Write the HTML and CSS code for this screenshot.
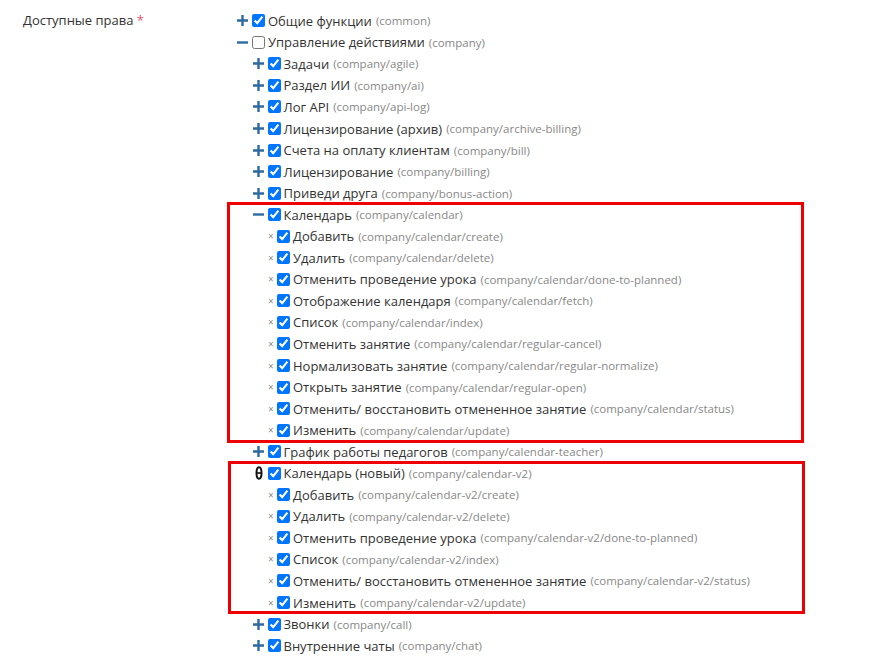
FILE: index.html
```html
<!DOCTYPE html>
<html lang="ru">
<head>
    <meta charset="UTF-8">
    <meta name="viewport" content="width=device-width, initial-scale=1.0">
    <title>Доступные права</title>
    <link rel="stylesheet" href="styles.css">
</head>
<body>
    <svg width="0" height="0" class="defs">
        <symbol id="i-plus" viewBox="0 0 11 11"><path d="M0 5.5h11M5.5 0v11" stroke="currentColor" stroke-width="2.4"/></symbol>
        <symbol id="i-minus" viewBox="0 0 11 11"><path d="M0 5.5h11" stroke="currentColor" stroke-width="2.4"/></symbol>
        <symbol id="i-load" viewBox="0 0 8 14"><ellipse cx="4" cy="7" rx="2.5" ry="5.8" fill="none" stroke="currentColor" stroke-width="2"/><path d="M1.5 7h5" stroke="currentColor" stroke-width="1.6"/></symbol>
    </svg>

    <div class="field">
        <label class="field-label">Доступные права <span class="req">*</span></label>

        <ul class="tree">
            <li>
                <div class="node"><svg class="tg"><use href="#i-plus"/></svg><input type="checkbox" checked><span class="name">Общие функции</span> <span class="code">(common)</span></div>
            </li>
            <li>
                <div class="node"><svg class="tg"><use href="#i-minus"/></svg><input type="checkbox"><span class="name">Управление действиями</span> <span class="code">(company)</span></div>
                <ul>
                    <li><div class="node"><svg class="tg"><use href="#i-plus"/></svg><input type="checkbox" checked><span class="name">Задачи</span> <span class="code">(company/agile)</span></div></li>
                    <li><div class="node"><svg class="tg"><use href="#i-plus"/></svg><input type="checkbox" checked><span class="name">Раздел ИИ</span> <span class="code">(company/ai)</span></div></li>
                    <li><div class="node"><svg class="tg"><use href="#i-plus"/></svg><input type="checkbox" checked><span class="name">Лог API</span> <span class="code">(company/api-log)</span></div></li>
                    <li><div class="node"><svg class="tg"><use href="#i-plus"/></svg><input type="checkbox" checked><span class="name">Лицензирование (архив)</span> <span class="code">(company/archive-billing)</span></div></li>
                    <li><div class="node"><svg class="tg"><use href="#i-plus"/></svg><input type="checkbox" checked><span class="name">Счета на оплату клиентам</span> <span class="code">(company/bill)</span></div></li>
                    <li><div class="node"><svg class="tg"><use href="#i-plus"/></svg><input type="checkbox" checked><span class="name">Лицензирование</span> <span class="code">(company/billing)</span></div></li>
                    <li><div class="node"><svg class="tg"><use href="#i-plus"/></svg><input type="checkbox" checked><span class="name">Приведи друга</span> <span class="code">(company/bonus-action)</span></div></li>
                    <li class="mark">
                        <div class="node"><svg class="tg"><use href="#i-minus"/></svg><input type="checkbox" checked><span class="name">Календарь</span> <span class="code">(company/calendar)</span></div>
                        <ul>
                            <li><div class="node"><span class="leaf">×</span><input type="checkbox" checked><span class="name">Добавить</span> <span class="code">(company/calendar/create)</span></div></li>
                            <li><div class="node"><span class="leaf">×</span><input type="checkbox" checked><span class="name">Удалить</span> <span class="code">(company/calendar/delete)</span></div></li>
                            <li><div class="node"><span class="leaf">×</span><input type="checkbox" checked><span class="name">Отменить проведение урока</span> <span class="code">(company/calendar/done-to-planned)</span></div></li>
                            <li><div class="node"><span class="leaf">×</span><input type="checkbox" checked><span class="name">Отображение календаря</span> <span class="code">(company/calendar/fetch)</span></div></li>
                            <li><div class="node"><span class="leaf">×</span><input type="checkbox" checked><span class="name">Список</span> <span class="code">(company/calendar/index)</span></div></li>
                            <li><div class="node"><span class="leaf">×</span><input type="checkbox" checked><span class="name">Отменить занятие</span> <span class="code">(company/calendar/regular-cancel)</span></div></li>
                            <li><div class="node"><span class="leaf">×</span><input type="checkbox" checked><span class="name">Нормализовать занятие</span> <span class="code">(company/calendar/regular-normalize)</span></div></li>
                            <li><div class="node"><span class="leaf">×</span><input type="checkbox" checked><span class="name">Открыть занятие</span> <span class="code">(company/calendar/regular-open)</span></div></li>
                            <li><div class="node"><span class="leaf">×</span><input type="checkbox" checked><span class="name">Отменить/ восстановить отмененное занятие</span> <span class="code">(company/calendar/status)</span></div></li>
                            <li><div class="node"><span class="leaf">×</span><input type="checkbox" checked><span class="name">Изменить</span> <span class="code">(company/calendar/update)</span></div></li>
                        </ul>
                    </li>
                    <li><div class="node"><svg class="tg"><use href="#i-plus"/></svg><input type="checkbox" checked><span class="name">График работы педагогов</span> <span class="code">(company/calendar-teacher)</span></div></li>
                    <li class="mark mark-v2">
                        <div class="node"><svg class="tg tg-load"><use href="#i-load"/></svg><input type="checkbox" checked><span class="name">Календарь (новый)</span> <span class="code">(company/calendar-v2)</span></div>
                        <ul>
                            <li><div class="node"><span class="leaf">×</span><input type="checkbox" checked><span class="name">Добавить</span> <span class="code">(company/calendar-v2/create)</span></div></li>
                            <li><div class="node"><span class="leaf">×</span><input type="checkbox" checked><span class="name">Удалить</span> <span class="code">(company/calendar-v2/delete)</span></div></li>
                            <li><div class="node"><span class="leaf">×</span><input type="checkbox" checked><span class="name">Отменить проведение урока</span> <span class="code">(company/calendar-v2/done-to-planned)</span></div></li>
                            <li><div class="node"><span class="leaf">×</span><input type="checkbox" checked><span class="name">Список</span> <span class="code">(company/calendar-v2/index)</span></div></li>
                            <li><div class="node"><span class="leaf">×</span><input type="checkbox" checked><span class="name">Отменить/ восстановить отмененное занятие</span> <span class="code">(company/calendar-v2/status)</span></div></li>
                            <li><div class="node"><span class="leaf">×</span><input type="checkbox" checked><span class="name">Изменить</span> <span class="code">(company/calendar-v2/update)</span></div></li>
                        </ul>
                    </li>
                    <li><div class="node"><svg class="tg"><use href="#i-plus"/></svg><input type="checkbox" checked><span class="name">Звонки</span> <span class="code">(company/call)</span></div></li>
                    <li><div class="node"><svg class="tg"><use href="#i-plus"/></svg><input type="checkbox" checked><span class="name">Внутренние чаты</span> <span class="code">(company/chat)</span></div></li>
                </ul>
            </li>
        </ul>
    </div>
</body>
</html>
```

FILE: styles.css
```css
body {
    margin: 0;
    background-color: #fff;
    color: #333;
    font-family: 'Open Sans', sans-serif;
    font-size: 13px;
}
.defs {
    position: absolute;
}
.field {
    display: grid;
    grid-template-columns: 214px 1fr;
    padding: 10px 0 0 23px;
}
.field-label {
    line-height: 21.55px;
}
.req {
    color: #e0566a;
}
.tree, .tree ul {
    list-style: none;
    margin: 0;
    padding: 0;
}
.tree ul {
    padding-left: 15.5px;
}
.node {
    display: flex;
    align-items: center;
    height: 21.55px;
    white-space: nowrap;
}
.node input {
    width: 13px;
    height: 13px;
    margin: 0 3px 0 4px;
    flex: none;
}
.tg {
    width: 11px;
    height: 11px;
    color: #2d6a9f;
    flex: none;
}
.tg-load {
    width: 8px;
    height: 14px;
    margin-left: 2px;
    margin-right: 1px;
    color: #111;
}
.leaf {
    color: #8a8a8a;
    font-size: 10px;
    width: 6px;
    margin-right: -1px;
}
.code {
    color: #888;
    font-size: 11.5px;
    margin-left: 4px;
}

/* выделение групп */
.mark {
    width: 549px;
    margin-left: -24px;
    padding-left: 24px;
    outline: 3px solid #ee0000;
    outline-offset: -1px;
}
.mark-v2 {
    width: 551px;
    outline-offset: -2px;
}
```
